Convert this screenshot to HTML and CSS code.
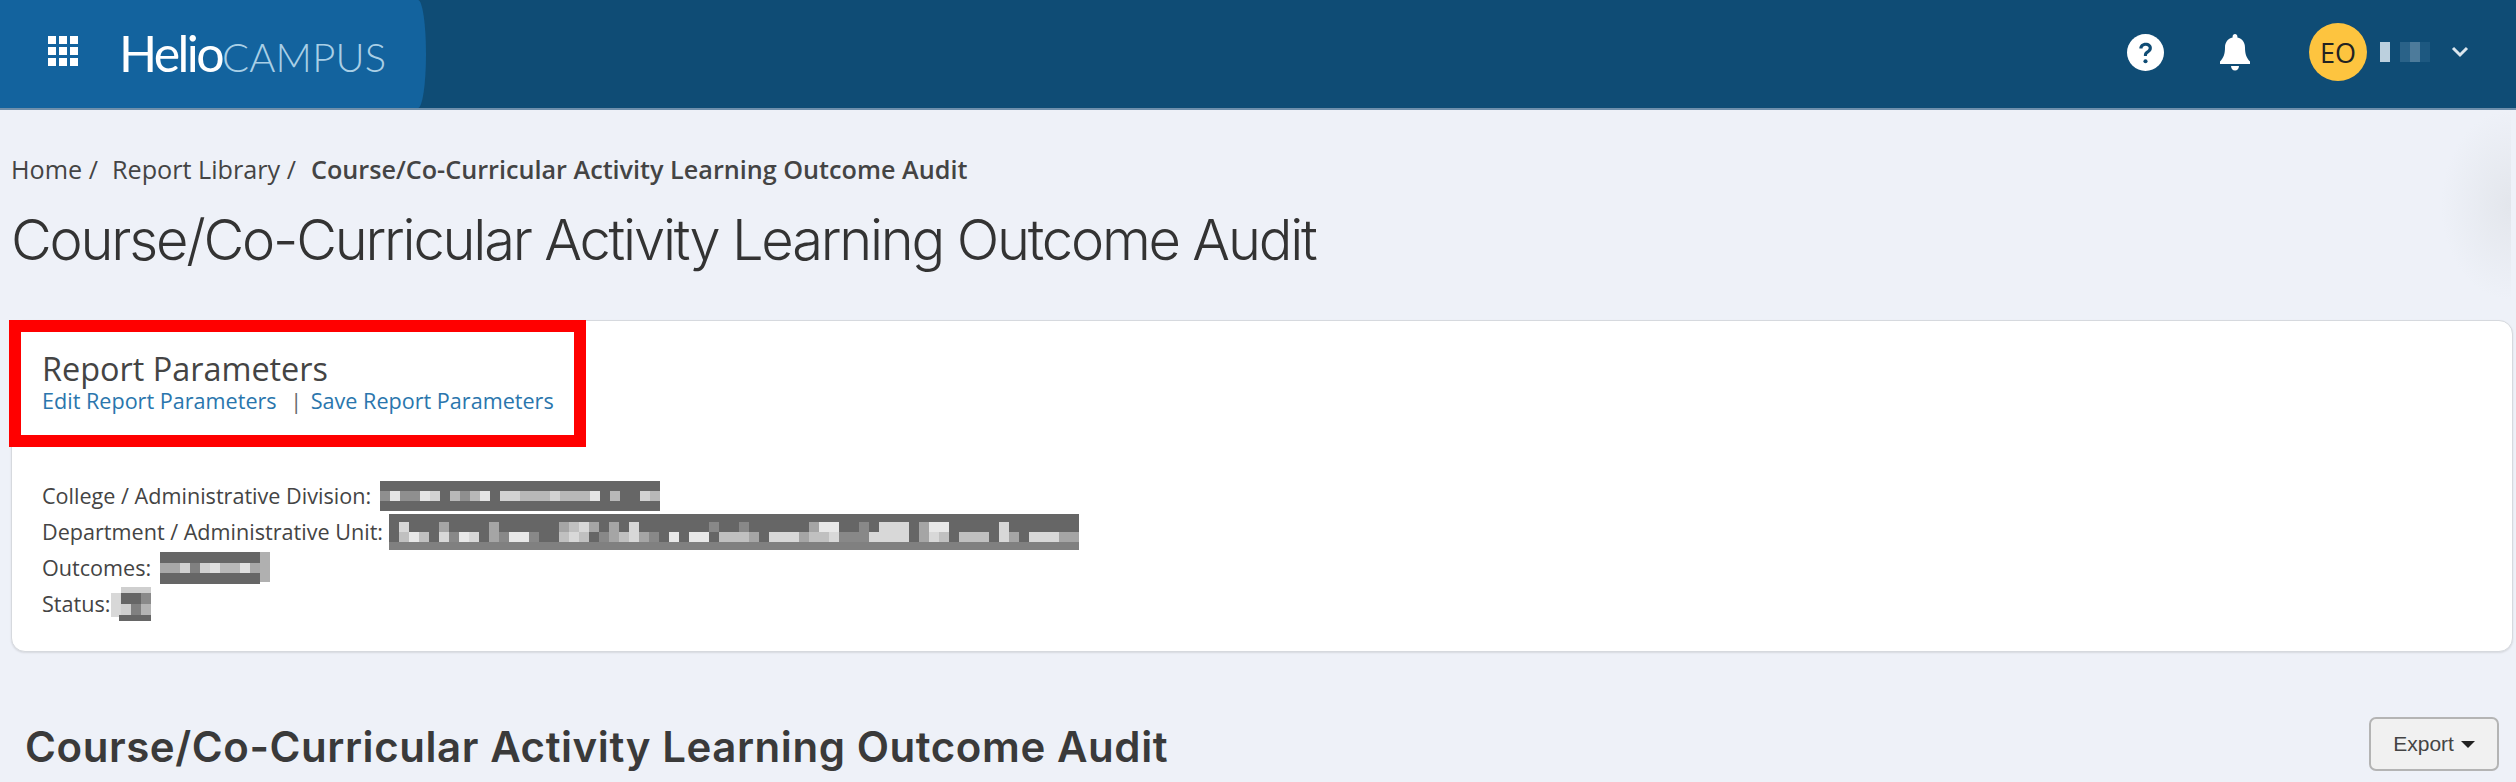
FILE: index.html
```html
<!DOCTYPE html>
<html lang="en">
<head>
<meta charset="UTF-8">
<title>Course/Co-Curricular Activity Learning Outcome Audit</title>
<link rel="stylesheet" href="styles.css">
</head>
<body>

<header class="topbar">
  <div class="brand">
    <div class="appsIcon"><i></i><i></i><i></i><i></i><i></i><i></i><i></i><i></i><i></i></div>
    <div class="logo"><span class="logoMain">Helio</span><span class="logoSub">CAMPUS</span></div>
  </div>
  <div class="topActions">
    <svg class="helpIcon" viewBox="0 0 36 36" width="37" height="37">
      <circle cx="18" cy="18" r="18" fill="#fff"/>
      <path d="M12 14.2c0-3.4 2.7-5.6 6.2-5.6 3.400 0 6 2 6 5.100 0 2.400-1.300 3.600-3 4.700-1.400.9-1.800 1.500-1.800 3h-3c0-2.700.8-3.800 2.600-5 1.300-.9 2.100-1.500 2.100-2.700 0-1.300-1.100-2.200-2.900-2.200-1.800 0-3 1-3.100 2.700z" fill="#0f4c75"/>
      <circle cx="18" cy="26.500" r="2" fill="#0f4c75"/>
    </svg>
    <svg class="bellIcon" viewBox="0 0 30 37" width="30" height="37">
      <path d="M15 0c1.400 0 2.400 1 2.400 2.400v1.100c4.900 1.100 7.600 5 7.600 9.900 0 6.600 1.600 10.600 5 14.100v2.500H0v-2.500c3.400-3.500 5-7.500 5-14.100 0-4.900 2.700-8.800 7.600-9.900V2.400C12.600 1 13.600 0 15 0z" fill="#fff"/>
      <path d="M11 32h8c0 2.600-1.700 4.500-4 4.500s-4-1.900-4-4.500z" fill="#fff"/>
    </svg>
    <div class="avatar">EO</div>
    <svg class="nameBlur" viewBox="0 0 50 20" width="50" height="20" shape-rendering="crispEdges">
      <rect x="0" width="10" height="20" fill="#bcd0de"/>
      <rect x="20" width="10" height="20" fill="#2a6288"/>
      <rect x="30" width="10" height="20" fill="#4d7b9b"/>
      <rect x="40" width="10" height="20" fill="#1d5880"/>
    </svg>
    <svg class="chevron" viewBox="0 0 18 12" width="18" height="12">
      <path d="M2 2l7 7 7-7" fill="none" stroke="#dbe6ee" stroke-width="3"/>
    </svg>
  </div>
</header>

<main class="page">

  <div class="edgeShade"></div>

  <nav class="breadcrumb">
    <span>Home /</span>
    <span>Report Library /</span>
    <b>Course/Co-Curricular Activity Learning Outcome Audit</b>
  </nav>

  <h1 class="pageTitle">Course/Co-Curricular Activity Learning Outcome Audit</h1>

  <section class="card">
    <div class="cardHead">
      <h2 class="cardTitle">Report Parameters</h2>
      <div class="cardLinks">
        <a href="#">Edit Report Parameters</a>
        <span class="sep">|</span>
        <a href="#">Save Report Parameters</a>
      </div>
    </div>

    <div class="params">
      <div class="paramRow">
        <span>College / Administrative Division:</span>
        <svg class="blur" viewBox="0 0 280 30" width="280" height="30" shape-rendering="crispEdges">
          <rect width="280" height="30" fill="#666"/>
          <g stroke-width="10" fill="none">
            <path stroke="#8f8f8f" d="M0 15h10M20 15h20M80 15h10"/>
            <path stroke="#e4e4e4" d="M10 15h10M40 15h10M100 15h10M210 15h10"/>
            <path stroke="#d2d2d2" d="M50 15h10M120 15h20M170 15h10M260 15h10"/>
            <path stroke="#b8b8b8" d="M70 15h10M90 15h10M140 15h30M180 15h30M230 15h10M270 15h10"/>
          </g>
        </svg>
      </div>
      <div class="paramRow">
        <span>Department / Administrative Unit:</span>
        <svg class="blur deptBlur" viewBox="0 0 690 36" width="690" height="36" shape-rendering="crispEdges">
          <rect width="690" height="36" fill="#666"/>
          <rect y="28" width="690" height="8" fill="#808080"/>
          <g stroke-width="10" fill="none">
            <path stroke="#e8e8e8" d="M430 13h20M540 13h20M20 23h10M70 23h10M120 23h20M280 23h10M300 23h20"/>
            <path stroke="#d8d8d8" d="M10 13h10M240 13h10M190 13h10M490 13h30M610 13h10M50 23h10M80 23h10M180 23h10M240 23h10M380 23h30M440 23h10M480 23h40M540 23h10M610 23h10M640 23h30"/>
            <path stroke="#c0c0c0" d="M180 13h10M10 23h10M30 23h10M170 23h10M190 23h10M230 23h10M330 23h30M420 23h20M550 23h10M570 23h30"/>
            <path stroke="#a5a5a5" d="M50 13h10M100 13h10M170 13h10M200 13h10M220 13h10M420 13h10M530 13h10M100 23h10M220 23h10M250 23h20M360 23h10M410 23h10M530 23h10M620 23h10M670 23h20"/>
            <path stroke="#888" d="M320 13h10M350 13h10M470 13h10M60 23h10M110 23h10M140 23h10M210 23h10M260 23h10M450 23h30"/>
          </g>
        </svg>
      </div>
      <div class="paramRow">
        <span>Outcomes:</span>
        <svg class="blur" viewBox="0 0 110 32" width="110" height="32" shape-rendering="crispEdges">
          <rect width="100" height="32" fill="#666"/>
          <rect x="100" width="10" height="30" fill="#b0b0b0"/>
          <g stroke-width="10" fill="none">
            <path stroke="#a8a8a8" d="M0 16h20M90 16h10"/>
            <path stroke="#d0d0d0" d="M20 16h10M40 16h10"/>
            <path stroke="#e0e0e0" d="M50 16h10M80 16h10"/>
            <path stroke="#b8b8b8" d="M60 16h20"/>
            <path stroke="#808080" d="M30 16h10"/>
          </g>
        </svg>
      </div>
      <div class="paramRow statusRow">
        <span>Status:</span>
        <svg class="blur" viewBox="0 0 40 34" width="40" height="34" shape-rendering="crispEdges">
          <rect x="10" width="30" height="28" fill="#cfcfcf"/>
          <rect y="6" width="10" height="24" fill="#d8d8d8"/>
          <rect x="10" y="6" width="20" height="11" fill="#666"/>
          <rect x="30" y="6" width="10" height="11" fill="#8a8a8a"/>
          <rect x="20" y="17" width="10" height="11" fill="#808080"/>
          <rect x="30" y="17" width="10" height="11" fill="#b4b4b4"/>
          <rect x="8" y="28" width="34" height="6" fill="#666"/>
        </svg>
      </div>
    </div>
  </section>

  <div class="reportHead">
    <h2 class="reportTitle">Course/Co-Curricular Activity Learning Outcome Audit</h2>
    <button class="exportBtn">Export <i class="caret"></i></button>
  </div>

</main>

</body>
</html>
```
FILE: styles.css
```css
*,*:before,*:after{
margin:0;
padding:0;
box-sizing:border-box;
}

:root{
--bar:#0f4c75;
--bar_left:#13639e;
--page_bg:#eef1f8;
--text:#444;
--link:#2a76ad;
}

html,body{
height:100%;
overflow:hidden;
}

body{
background:var(--page_bg);
color:var(--text);
font-family:"Open Sans", sans-serif;
}

/* top bar */
.topbar{
height:110px;
display:flex;
align-items:stretch;
justify-content:space-between;
background:var(--bar);
border-bottom:2px solid #6f8fab;
}

.brand{
width:426px;
display:flex;
align-items:center;
padding-left:48px;
background:var(--bar_left);
border-radius:0 8px 8px 0 / 0 50% 50% 0;
}

.appsIcon{
width:30px;
height:30px;
margin-top:-6px;
display:grid;
grid-template-columns:repeat(3, 8px);
grid-template-rows:repeat(3, 8px);
gap:3px;
}

.appsIcon i{
background:#fff;
}

.logo{
margin-left:41px;
display:flex;
align-items:baseline;
color:#fff;
font-family:Lato, sans-serif;
font-weight:300;
margin-top:-2px;
}

.logoMain{
font-size:50px;
font-weight:400;
letter-spacing:-2.6px;
}

.logoSub{
margin-left:0;
font-size:40px;
letter-spacing:.2px;
color:#a9cfe6;
}

.topActions{
display:flex;
align-items:center;
padding-right:47px;
margin-top:-4px;
}

.helpIcon{
margin-right:56px;
}

.bellIcon{
margin-right:59px;
}

.avatar{
width:58px;
height:58px;
border-radius:50%;
display:flex;
align-items:center;
justify-content:center;
background:#fdc43f;
color:#222;
font-size:27px;
}

.nameBlur{
margin-left:13px;
}

.chevron{
margin-left:21px;
}

/* page */
.page{
position:relative;
}

.edgeShade{
position:absolute;
top:0;
right:5px;
width:70px;
height:190px;
background:radial-gradient(ellipse 70px 95px at 100% 50%, #e3e6ec, #eef1f8);
}

.breadcrumb{
padding:43px 0 0 11px;
display:flex;
gap:14px;
font-size:25.2px;
line-height:33px;
}

.breadcrumb b{
font-weight:600;
margin-left:1px;
}

.pageTitle{
margin:18px 0 0 11px;
font-family:Inter, sans-serif;
font-weight:300;
font-size:56px;
line-height:72px;
letter-spacing:-2.2px;
color:#333;
}

.card{
position:relative;
margin:44px 3px 0 11px;
height:332px;
background:#fff;
border:1px solid #d6d9de;
border-radius:14px;
box-shadow:0 1px 2px #0000001a;
}

.cardHead{
width:577px;
height:127px;
margin:-1px 0 0 -3px;
padding:18px 0 0 21px;
border:12px solid #f00;
}

.cardTitle{
font-weight:400;
font-size:32.4px;
line-height:36px;
color:#444;
}

.cardLinks{
font-size:21.6px;
line-height:30px;
color:#666;
}

.cardLinks a{
color:var(--link);
text-decoration:none;
}

.sep{
margin:0 3px 0 8px;
}

.params{
padding:31px 0 0 30px;
font-size:21.6px;
line-height:36px;
}

.paramRow{
display:flex;
align-items:center;
gap:9px;
height:36px;
}

.deptBlur{
margin-left:-3px;
}

.statusRow{
gap:1px;
}

/* report heading */
.reportHead{
display:flex;
align-items:flex-start;
justify-content:space-between;
padding:68px 17px 0 25px;
}

.reportTitle{
font-family:Inter, sans-serif;
font-weight:600;
font-size:42px;
line-height:54px;
letter-spacing:.57px;
color:#3a3a3a;
}

.exportBtn{
width:130px;
height:54px;
margin-top:-3px;
background:#f1f1f1;
border:2px solid #b4b4b4;
border-radius:7px;
color:#444;
font-family:"Liberation Sans", sans-serif;
font-size:21px;
}

.caret{
display:inline-block;
width:0;
height:0;
margin-left:1px;
vertical-align:3px;
border-left:7px solid transparent;
border-right:7px solid transparent;
border-top:7px solid #222;
}
```
